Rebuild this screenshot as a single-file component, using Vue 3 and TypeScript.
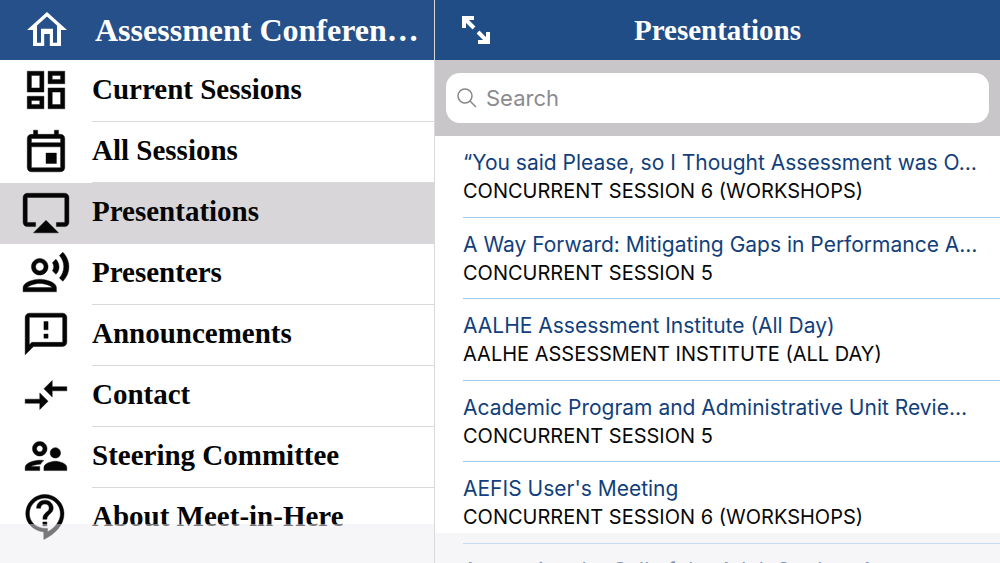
<script setup lang="ts">
import { ref } from 'vue'

interface MenuItem {
  label: string
  icon: string
  large?: boolean
}

interface Presentation {
  title: string
  session: string
}

const menu: MenuItem[] = [
  { label: 'Current Sessions', icon: 'M19 5v2h-4V5h4M9 5v6H5V5h4m10 8v6h-4v-6h4M9 17v2H5v-2h4M21 3h-8v6h8V3zM11 3H3v10h8V3zm10 8h-8v10h8V11zm-10 4H3v6h8v-6z' },
  { label: 'All Sessions', icon: 'M19 4h-1V2h-2v2H8V2H6v2H5c-1.11 0-1.99.9-1.99 2L3 20c0 1.1.89 2 2 2h14c1.1 0 2-.9 2-2V6c0-1.1-.9-2-2-2zm0 16H5V10h14v10zm0-12H5V6h14v2zm-7 5h5v5h-5v-5z' },
  { label: 'Presentations', icon: 'M6 22h12l-6-6-6 6zM21 3H3c-1.1 0-2 .9-2 2v12c0 1.1.9 2 2 2h4v-2H3V5h18v12h-4v2h4c1.1 0 2-.9 2-2V5c0-1.1-.9-2-2-2z' },
  { label: 'Presenters', icon: 'M9 13c2.21 0 4-1.79 4-4s-1.79-4-4-4-4 1.79-4 4 1.79 4 4 4zm0-6c1.1 0 2 .9 2 2s-.9 2-2 2-2-.9-2-2 .9-2 2-2zm0 8c-2.67 0-8 1.34-8 4v2h16v-2c0-2.66-5.33-4-8-4zm-6 4c.22-.72 3.31-2 6-2 2.7 0 5.8 1.29 6 2H3zM15.08 7.05c.84 1.18.84 2.71 0 3.89l1.68 1.69c2.02-2.02 2.02-5.07 0-7.27l-1.68 1.69zM20.07 2l-1.63 1.63c2.77 3.02 2.77 7.56 0 10.74L20.07 16c3.9-3.89 3.91-9.95 0-14z' },
  { label: 'Announcements', icon: 'M20 2H4c-1.1 0-2 .9-2 2v18l4-4h14c1.1 0 2-.9 2-2V4c0-1.1-.9-2-2-2zm0 14H5.17L4 17.17V4h16v12zm-9-4h2v2h-2zm0-6h2v4h-2z' },
  { label: 'Contact', icon: 'M9.01 14H2v2h7.01v3L13 15l-3.99-4v3zm5.98-1v-3H22V8h-7.01V5L11 9l3.99 4z' },
  { label: 'Steering Committee', icon: 'M9 12c1.93 0 3.5-1.57 3.5-3.5S10.93 5 9 5 5.5 6.57 5.5 8.5 7.07 12 9 12zm0-5c.83 0 1.5.67 1.5 1.5S9.83 10 9 10s-1.5-.67-1.5-1.5S8.17 7 9 7zm.05 10H4.77c.99-.5 2.7-1 4.23-1 .11 0 .23.01.34.01.34-.73.93-1.33 1.64-1.81-.73-.13-1.42-.2-1.98-.2-2.34 0-7 1.17-7 3.5V19h7v-1.5c0-.17.02-.34.05-.5zm7.45-2.5c-1.84 0-5.5 1.01-5.5 3V19h11v-1.5c0-1.99-3.66-3-5.5-3zm0-1.5c1.38 0 2.5-1.12 2.5-2.5S17.88 8 16.5 8 14 9.12 14 10.5s1.12 2.5 2.5 2.5z' },
  { label: 'About Meet-in-Here', large: true, icon: 'M11.5 2C6.81 2 3 5.81 3 10.5c0 4.4 3.5 7.5 8 8.2V22c5.2-2.5 9-6.6 9-11.5C20 5.81 16.19 2 11.5 2zm1.2 16.6V17.1c-4.6.2-8.1-2.6-8.1-6.6C4.6 6.7 7.7 3.6 11.5 3.6s6.9 3.1 6.9 6.9c0 3.2-2.2 6.1-5.7 8.1zM10.6 14.2h1.8V16h-1.8zm1.8-1.2h-1.8c0-3.25 2.8-3 2.8-5 0-1.1-.8-1.8-1.9-1.8s-1.9.8-1.9 1.9H7.8c0-2.1 1.6-3.6 3.7-3.6s3.7 1.5 3.7 3.5c0 2.5-2.8 2.75-2.8 5z' },
]

const presentations: Presentation[] = [
  { title: '“You said Please, so I Thought Assessment was O…', session: 'CONCURRENT SESSION 6 (WORKSHOPS)' },
  { title: 'A Way Forward: Mitigating Gaps in Performance A…', session: 'CONCURRENT SESSION 5' },
  { title: 'AALHE Assessment Institute (All Day)', session: 'AALHE ASSESSMENT INSTITUTE (ALL DAY)' },
  { title: 'Academic Program and Administrative Unit Revie…', session: 'CONCURRENT SESSION 5' },
  { title: "AEFIS User's Meeting", session: 'CONCURRENT SESSION 6 (WORKSHOPS)' },
  { title: 'Answering the Call of the Adult Student A…', session: '' },
]

const selected = ref('Presentations')
const query = ref('')
</script>

<template>
  <div class="app">
    <aside class="side">
      <header class="bar side-bar">
        <button class="icon-button" type="button" aria-label="Home">
          <svg class="home" viewBox="0 0 24 24"><path d="M12 5.3l5 4.5V18.4h-2v-7H9v7H7V9.800l5-4.5M12 3L2 12h3v8h5.600v-6h2.800v6H19v-8h3L12 3z" /></svg>
        </button>
        <h1 class="heading">Assessment Conferen…</h1>
      </header>
      <nav class="menu">
        <a
          v-for="item in menu"
          :key="item.label"
          class="menu-item"
          :class="{ active: item.label === selected }"
          href="#"
          @click.prevent="selected = item.label"
        >
          <span class="menu-icon">
            <svg :class="{ large: item.large }" viewBox="0 0 24 24" aria-hidden="true"><path :d="item.icon" /></svg>
          </span>
          <span class="menu-label">{{ item.label }}</span>
        </a>
      </nav>
      <div class="footer-bar side-footer"></div>
    </aside>

    <main class="content">
      <header class="bar content-bar">
        <button class="icon-button expand" type="button" aria-label="Toggle full screen">
          <svg viewBox="0 0 28 28"><path d="M2 12V2H12M2 2L12 12M26 16V26H16M26 26L16 16" /></svg>
        </button>
        <h2 class="heading">Presentations</h2>
      </header>
      <div class="search-strip">
        <label class="search">
          <svg viewBox="0 0 20 20" aria-hidden="true"><circle cx="8" cy="8" r="7" /><path d="M13 13l6 6" /></svg>
          <input v-model="query" type="search" placeholder="Search" aria-label="Search" />
        </label>
      </div>
      <ul class="list">
        <li v-for="entry in presentations" :key="entry.title">
          <a class="entry" href="#" @click.prevent>
            <span class="title">{{ entry.title }}</span>
            <span v-if="entry.session" class="session">{{ entry.session }}</span>
          </a>
        </li>
      </ul>
      <div class="footer-bar content-footer"></div>
    </main>
  </div>
</template>

<style>
body {
  margin: 0;
  overflow: hidden;
}
</style>

<style scoped>
.app {
  display: grid;
  grid-template-columns: 435fr 565fr;
  height: 100vh;
  overflow: hidden;
  background: #fff;
  font-family: Inter, "Liberation Sans", sans-serif;
}

.side,
.content {
  position: relative;
  min-width: 0;
  overflow: hidden;
}

.side {
  box-sizing: border-box;
  border-right: 1px solid #d9d8da;
}

.bar {
  display: flex;
  align-items: center;
  box-sizing: border-box;
  height: 60px;
  background: #214d86;
  color: #fff;
}

.side-bar {
  gap: 24px;
  padding-left: 23px;
  background: #255089;
  box-shadow: 1px 0 #4d719f;
}

.heading {
  margin: 0;
  font: bold 29px/36px "Palatino Linotype", Palatino, "Liberation Serif", serif;
  white-space: nowrap;
}

.side-bar .heading {
  font-size: 32px;
}

.icon-button {
  display: flex;
  padding: 0;
  border: 0;
  background: none;
  color: inherit;
  cursor: pointer;
}

.home {
  width: 48px;
  height: 48px;
  fill: currentColor;
}

.content-bar {
  display: grid;
  grid-template-columns: 1fr auto 1fr;
  padding: 0 27px;
}

.expand svg {
  width: 28px;
  height: 28px;
  fill: none;
  stroke: currentColor;
  stroke-width: 4;
}

.menu {
  padding-top: 1px;
}

.menu-item {
  display: flex;
  height: 61px;
  color: #050505;
  text-decoration: none;
}

.menu-item.active {
  background: #d8d6d9;
}

.menu-icon {
  display: flex;
  flex: none;
  align-items: center;
  justify-content: center;
  box-sizing: border-box;
  width: 92px;
  padding-bottom: 4px;
}

.menu-icon svg {
  width: 50px;
  height: 50px;
  fill: currentColor;
  stroke: currentColor;
  stroke-width: 0.2;
}

.menu-icon .large {
  width: 54px;
  height: 54px;
}

.menu-label {
  flex: 1;
  box-sizing: border-box;
  border-bottom: 1px solid #d9d9db;
  font: bold 29px/56px "Palatino Linotype", Palatino, "Liberation Serif", serif;
  white-space: nowrap;
}

.menu-item:last-child .menu-label {
  border-bottom-color: transparent;
}

.search-strip {
  padding: 13px 11px;
  background: #c9c6ca;
}

.search {
  display: flex;
  align-items: center;
  gap: 9px;
  height: 50px;
  padding: 0 11px;
  border-radius: 14px;
  background: #fff;
}

.search svg {
  flex: none;
  width: 20px;
  height: 20px;
  fill: none;
  stroke: #87878a;
  stroke-width: 1.500;
}

.search input {
  flex: 1;
  min-width: 0;
  padding: 0;
  border: 0;
  outline: 0;
  background: none;
  color: #111;
  font: 22px/30px Inter, "Liberation Sans", sans-serif;
}

.search input::placeholder {
  color: #8b8b8f;
  opacity: 1;
}

.list {
  margin: 0;
  padding: 0 0 0 28px;
  list-style: none;
}

.entry {
  display: block;
  box-sizing: border-box;
  height: 82px;
  padding-top: 12px;
  border-bottom: 1px solid #a0cbed;
  text-decoration: none;
  white-space: nowrap;
}

li:nth-child(even) .entry {
  height: 81px;
}

.title,
.session {
  display: block;
  line-height: 29px;
}

.title {
  color: #123f7b;
  font-size: 21px;
}

.session {
  color: #080808;
  font-size: 20px;
}

.footer-bar {
  position: absolute;
  right: 0;
  bottom: 0;
  left: 0;
  background: rgba(238, 238, 244, 0.5);
  pointer-events: none;
}

.side-footer {
  height: 39px;
}

.content-footer {
  height: 30px;
}
</style>
